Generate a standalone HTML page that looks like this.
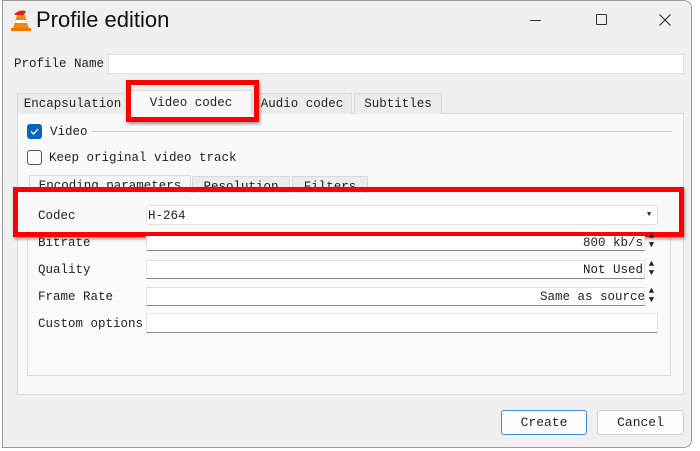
<!DOCTYPE html>
<html><head><meta charset="utf-8"><style>
*{margin:0;padding:0;box-sizing:border-box}
body{width:700px;height:451px;background:#fff;position:relative;overflow:hidden;font-family:"Liberation Mono",monospace;font-size:12px;color:#222}
.a{position:absolute}
.win{left:2px;top:0;width:690px;height:448px;background:#f0f0f0;border:1px solid #9a9a9a;border-radius:0 8px 8px 0;overflow:hidden}
.field{background:#fff;border:1px solid #e3e3e3;border-bottom:1px solid #8a8a8a}
.tab{top:93px;height:21px;background:#ececec;border:1px solid #dadada;border-bottom:none;text-align:center;line-height:21px;font-size:12.5px}
.lbl{font-size:12.5px;margin-top:1px}
.red{border:5px solid #f00;box-shadow:1px 2px 3px rgba(0,0,0,.4)}
.spin{width:11px;height:18px;font-size:9px;line-height:9px;text-align:center;color:#222}
</style></head><body>
<div class="a win"></div>
<svg class="a" style="left:10px;top:6px" width="22" height="26" viewBox="0 0 22 26">
<path d="M4 9 Q8 3 16 5 L14 9 Z" fill="#e02020"/>
<path d="M7 9 L15 9 L19 23 L3 23 Z" fill="#f08a10"/>
<path d="M6 14 L16 14 L17 17 L5 17 Z" fill="#fff"/>
<rect x="1" y="22" width="20" height="3" fill="#e67a00"/>
</svg>
<div class="a" style="left:36px;top:7px;font-family:'Liberation Sans',sans-serif;font-size:22px;color:#111">Profile edition</div>
<div class="a" style="left:530px;top:20px;width:11px;height:1px;background:#333"></div>
<div class="a" style="left:596px;top:14px;width:11px;height:11px;border:1.3px solid #333;border-radius:1px"></div>
<svg class="a" style="left:659px;top:14px" width="12" height="12"><path d="M0.5 0.5L11.5 11.5M11.5 0.5L0.5 11.5" stroke="#333" stroke-width="1.2"/></svg>
<div class="a lbl" style="left:14px;top:56px">Profile Name</div>
<div class="a field" style="left:108px;top:54px;width:576px;height:20px;border-bottom-color:#e3e3e3"></div>
<div class="a" style="left:17px;top:113px;width:667px;height:282px;background:#f9f9f9;border:1px solid #dadada"></div>
<div class="a tab" style="left:17px;width:111px">Encapsulation</div>
<div class="a tab" style="left:130px;width:122px;top:90px;height:24px;background:#f9f9f9;line-height:24px">Video codec</div>
<div class="a tab" style="left:252px;width:100px">Audio codec</div>
<div class="a tab" style="left:354px;width:88px">Subtitles</div>
<div class="a red" style="left:126px;top:80px;width:133px;height:42px"></div>
<div class="a" style="left:27px;top:124px;width:15px;height:15px;background:#0067c0;border-radius:3px"></div>
<svg class="a" style="left:27px;top:124px" width="15" height="15"><path d="M4 7.5L6.5 10L11 5" stroke="#fff" stroke-width="1.3" fill="none"/></svg>
<div class="a lbl" style="left:50px;top:124px">Video</div>
<div class="a" style="left:92px;top:131px;width:580px;height:1px;background:#c8c8c8"></div>
<div class="a" style="left:27px;top:150px;width:15px;height:15px;border:1px solid #555;border-radius:3px;background:#fafafa"></div>
<div class="a lbl" style="left:49px;top:150px">Keep original video track</div>
<div class="a" style="left:27px;top:195px;width:644px;height:181px;background:#fafafa;border:1px solid #dadada"></div>
<div class="a tab" style="left:29px;top:175px;width:162px;height:21px;background:#f6f6f6">Encoding parameters</div>
<div class="a tab" style="left:192px;top:176px;width:98px;height:20px">Resolution</div>
<div class="a tab" style="left:292px;top:176px;width:76px;height:20px">Filters</div>
<div class="a" style="left:18px;top:193px;width:661px;height:38px;background:#f9f9f9"></div>
<div class="a red" style="left:13px;top:187px;width:671px;height:50px"></div>
<div class="a lbl" style="left:38px;top:208px">Codec</div>
<div class="a" style="left:146px;top:205px;width:512px;height:20px;background:#fff;border:1px solid #e0e0e0;border-radius:3px"></div>
<div class="a lbl" style="left:148px;top:208px">H-264</div>
<div class="a" style="left:647px;top:211px;font-size:7px">▼</div>
<div class="a lbl" style="left:38px;top:235px">Bitrate</div>
<div class="a field" style="left:146px;top:236px;width:499px;height:15px;border-top:none"></div>
<div class="a lbl" style="left:583px;top:235px">800 kb/s</div>
<div class="a spin" style="left:646px;top:232px">▲<br>▼</div>
<div class="a lbl" style="left:38px;top:262px">Quality</div>
<div class="a field" style="left:146px;top:260px;width:499px;height:19px"></div>
<div class="a lbl" style="left:583px;top:262px">Not Used</div>
<div class="a spin" style="left:646px;top:260px">▲<br>▼</div>
<div class="a lbl" style="left:38px;top:289px">Frame Rate</div>
<div class="a field" style="left:146px;top:287px;width:499px;height:19px"></div>
<div class="a lbl" style="left:540px;top:289px">Same as source</div>
<div class="a spin" style="left:646px;top:287px">▲<br>▼</div>
<div class="a lbl" style="left:38px;top:316px">Custom options</div>
<div class="a field" style="left:146px;top:313px;width:512px;height:20px"></div>
<div class="a" style="left:501px;top:410px;width:86px;height:25px;background:#fdfdfd;border:1px solid #3c8ee0;border-radius:3px;text-align:center;line-height:24px;font-size:13px">Create</div>
<div class="a" style="left:597px;top:410px;width:87px;height:25px;background:#fdfdfd;border:1px solid #d0d0d0;border-radius:3px;text-align:center;line-height:24px;font-size:13px">Cancel</div>
</body></html>
